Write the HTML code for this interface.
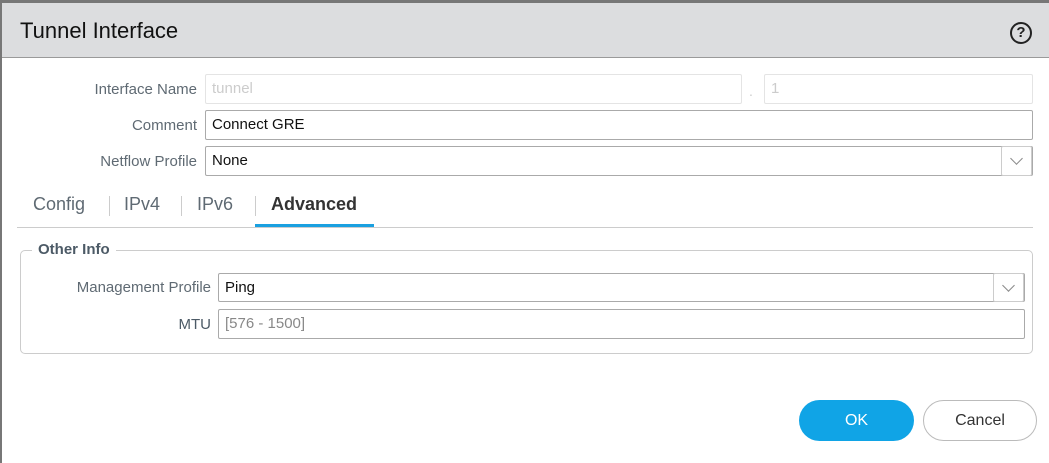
<!DOCTYPE html>
<html><head><style>
*{box-sizing:border-box;margin:0;padding:0}
body{width:1049px;height:463px;background:#777;position:relative;overflow:hidden;font-family:"Liberation Sans",sans-serif}
#dlg{position:absolute;left:2px;top:3px;right:0;bottom:0;background:#fff}
#hdr{position:absolute;left:0;top:0;right:0;height:55px;background:#dcdddf;border-bottom:1px solid #9a9a9a}
#hdr h1{position:absolute;left:18px;top:15px;font-size:22px;font-weight:normal;color:#111}
.help{position:absolute;right:17px;top:19px;width:22px;height:22px;border:2px solid #222;border-radius:50%;font-size:15px;font-weight:bold;text-align:center;line-height:18px;color:#222}
.lbl{position:absolute;font-size:15px;color:#5f6a73;text-align:right}
.inp{position:absolute;border:1px solid #aaa;border-radius:2px;font-size:15px;color:#111;padding-left:6px;line-height:28px;background:#fff}
.dis{border-color:#e4e4e4;color:#ccc}
.dd{position:absolute;right:0;top:-1px;width:31px;bottom:-1px;border:1px solid #ccc;border-radius:2px;background:#fff}
.dd:after{content:"";position:absolute;left:10px;top:7px;width:8px;height:8px;border-right:1.5px solid #888;border-bottom:1.5px solid #888;transform:rotate(45deg)}
.tab{position:absolute;top:191px;font-size:18px;color:#5f6a73}
.sep{position:absolute;top:193px;width:1px;height:20px;background:#ccc}
.btn{position:absolute;top:397px;height:41px;border-radius:21px;font-size:16px;text-align:center;line-height:41px}
</style></head><body>
<div id="dlg">
<div id="hdr"><h1>Tunnel Interface</h1><div class="help">?</div></div>
<div class="lbl" style="right:852px;top:78px">Interface Name</div>
<div class="inp dis" style="left:203px;top:71px;width:537px;height:30px">tunnel</div>
<div style="position:absolute;left:747px;top:80px;color:#ccc;font-size:14px">.</div>
<div class="inp dis" style="left:762px;top:71px;width:269px;height:30px">1</div>
<div class="lbl" style="right:852px;top:114px">Comment</div>
<div class="inp" style="left:203px;top:107px;width:828px;height:30px">Connect GRE</div>
<div class="lbl" style="right:852px;top:150px">Netflow Profile</div>
<div class="inp" style="left:203px;top:143px;width:828px;height:30px">None<div class="dd"></div></div>
<div class="tab" style="left:31px">Config</div>
<div class="sep" style="left:107px"></div>
<div class="tab" style="left:122px">IPv4</div>
<div class="sep" style="left:179px"></div>
<div class="tab" style="left:195px">IPv6</div>
<div class="sep" style="left:253px"></div>
<div class="tab" style="left:269px;font-weight:bold;color:#333">Advanced</div>
<div style="position:absolute;left:15px;top:224px;width:1016px;height:1px;background:#ccc"></div>
<div style="position:absolute;left:253px;top:221px;width:119px;height:3px;background:#1aa0e0"></div>
<div style="position:absolute;left:18px;top:247px;width:1013px;height:104px;border:1px solid #ccc;border-radius:5px"></div>
<div style="position:absolute;left:30px;top:238px;padding:0 6px;background:#fff;font-size:15px;font-weight:bold;color:#4c5a66">Other Info</div>
<div class="lbl" style="right:838px;top:276px">Management Profile</div>
<div class="inp" style="left:216px;top:270px;width:807px;height:29px">Ping<div class="dd"></div></div>
<div class="lbl" style="right:838px;top:313px;color:#4c5a66">MTU</div>
<div class="inp" style="left:216px;top:306px;width:807px;height:30px;color:#888">[576 - 1500]</div>
<div class="btn" style="left:797px;width:115px;background:#10a4e6;color:#fff">OK</div>
<div class="btn" style="left:921px;width:114px;border:1px solid #bbb;color:#333;background:#fff;line-height:39px">Cancel</div>
</div>
</body></html>
